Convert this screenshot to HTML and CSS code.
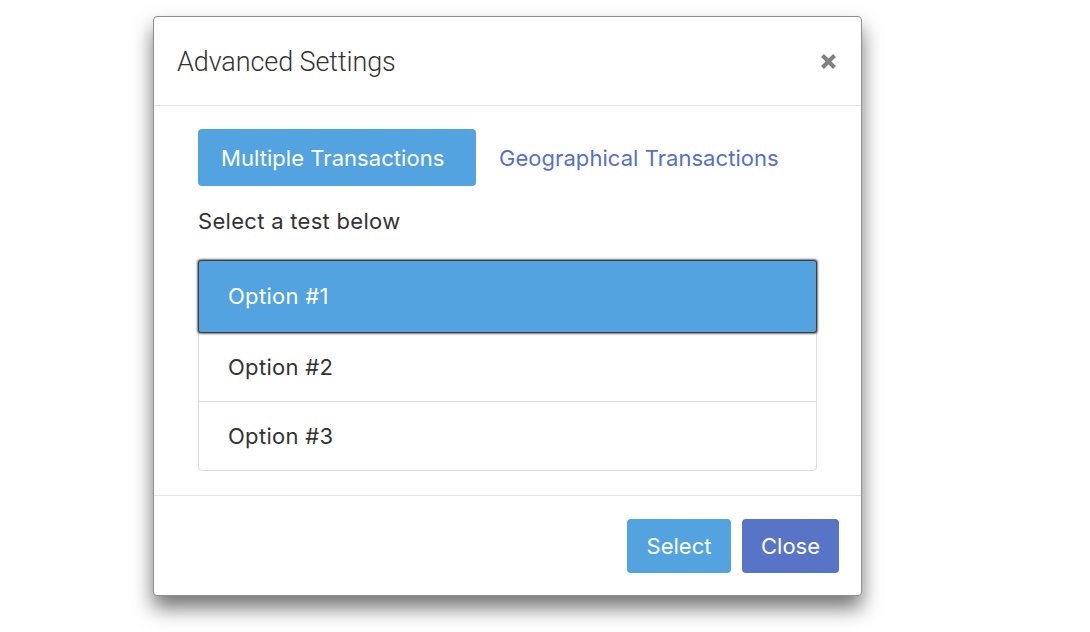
FILE: index.html
```html
<!DOCTYPE html>
<html>
<head>
<meta charset="utf-8">
<link rel="stylesheet" href="styles.css">
</head>
<body>
<div class="modal">
  <div class="modal-header">
    <h4 class="modal-title">Advanced Settings</h4>
    <button class="close" type="button" aria-label="Close">
      <svg width="17" height="17" viewBox="0 0 17 17"><path d="M2.5 2.5 L14.5 14.5 M14.5 2.5 L2.5 14.5" stroke="#808080" stroke-width="4" stroke-linecap="butt"/></svg>
    </button>
  </div>
  <div class="modal-body">
    <div class="tabs">
      <a class="tab active">Multiple Transactions</a>
      <a class="tab">Geographical Transactions</a>
    </div>
    <p class="hint">Select a test below</p>
    <div class="list">
      <div class="item active">Option #1</div>
      <div class="item">Option #2</div>
      <div class="item">Option #3</div>
    </div>
  </div>
  <div class="modal-footer">
    <button class="btn btn-select" type="button">Select</button>
    <button class="btn btn-close" type="button">Close</button>
  </div>
</div>
</body>
</html>
```
FILE: styles.css
```css
html, body {
  margin: 0;
  padding: 0;
  background: #fff;
}
body {
  font-family: Inter, "Liberation Sans", Arial, sans-serif;
  color: #333;
  padding: 16px 0 0 153px;
  min-height: 632px;
  box-sizing: border-box;
}
.modal {
  width: 709px;
  box-sizing: border-box;
  background: #fff;
  border: 1px solid #8f8f8f;
  border-radius: 4px;
  box-shadow: 0 12px 20px rgba(0, 0, 0, 0.55);
}
.modal-header {
  height: 89px;
  box-sizing: border-box;
  display: flex;
  align-items: center;
  justify-content: space-between;
  padding: 0 24px 0 23px;
  border-bottom: 1px solid #e5e5e5;
}
.modal-title {
  margin: 0;
  font-family: Roboto, "Liberation Sans", sans-serif;
  font-weight: 300;
  font-size: 27px;
  color: #333;
  letter-spacing: -0.1px;
  padding-top: 2px;
}
.close {
  border: 0;
  background: none;
  padding: 0;
  width: 17px;
  height: 17px;
  display: flex;
}
.modal-body {
  padding: 23px 44px 24px 44px;
}
.tabs {
  display: flex;
}
.tab {
  font-size: 22px;
  height: 57px;
  box-sizing: border-box;
  padding: 0 23px;
  display: flex;
  align-items: center;
  border-radius: 4px;
  color: #5670c6;
  letter-spacing: 0.05px;
}
.tab.active {
  background: #52a3e0;
  color: #fff;
  width: 278px;
}
.hint {
  margin: 23px 0 27px 0;
  font-size: 22px;
  line-height: 24px;
  letter-spacing: 0.3px;
  color: #333;
}
.list {
  display: flex;
  flex-direction: column;
}
.item {
  font-size: 22px;
  line-height: 24px;
  letter-spacing: 0.3px;
  padding: 22px 29px 22px;
  border: 1px solid #dcdcdc;
  margin-bottom: -1px;
  color: #333;
  background: #fff;
}
.item:first-child {
  border-radius: 4px 4px 0 0;
}
.item:last-child {
  border-radius: 0 0 4px 4px;
  margin-bottom: 0;
}
.item.active {
  position: relative;
  z-index: 1;
  background: #52a3e0;
  color: #fff;
  border: 1px solid #3d3d3d;
  padding: 23px 29px 24px;
  border-radius: 3px;
  box-shadow: 0 0 2px 1px rgba(0, 0, 0, 0.55);
}
.modal-footer {
  border-top: 1px solid #e5e5e5;
  display: flex;
  justify-content: flex-end;
  gap: 11px;
  padding: 23px 22px 22px;
}
.btn {
  font-family: Inter, "Liberation Sans", Arial, sans-serif;
  font-size: 22px;
  color: #fff;
  border: 0;
  border-radius: 4px;
  height: 54px;
  padding: 0;
  cursor: pointer;
}
.btn-select {
  background: #52a3e0;
  width: 104px;
}
.btn-close {
  background: #5874c6;
  width: 97px;
}
```
